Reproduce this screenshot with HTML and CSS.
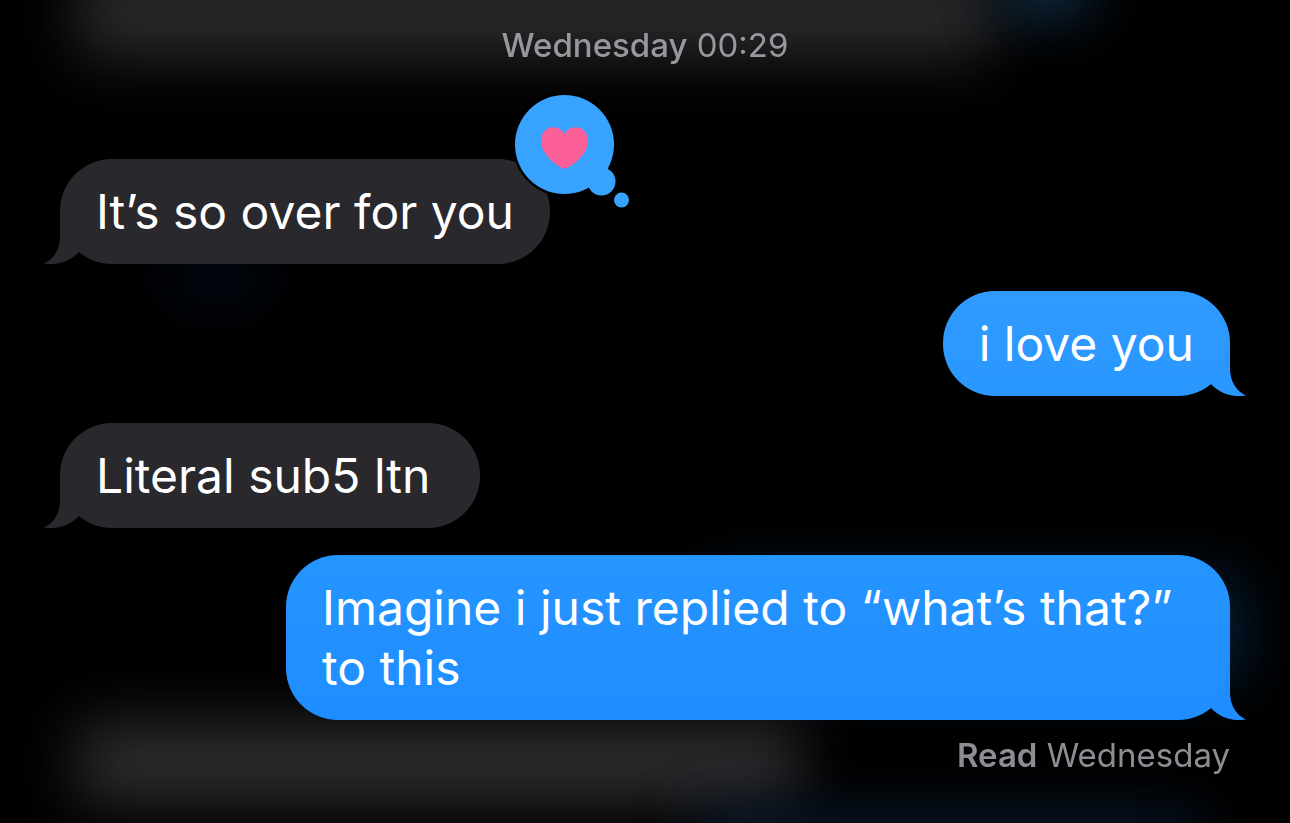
FILE: index.html
```html
<!DOCTYPE html>
<html lang="en">
<head>
	<meta charset="UTF-8">
	<meta name="viewport" content="width=device-width, initial-scale=1">
	<title>Messages</title>
	<link rel="stylesheet" href="styles.css">
</head>
<body>
	<svg class="defs" aria-hidden="true">
		<symbol id="tail" viewBox="0 0 40 54">
			<path d="M16 0V26C16 39 10 49 0 53.500C13 55.500 26 52 35 42L24 22L17 0Z"/>
		</symbol>
	</svg>
	<div class="backdrop" aria-hidden="true">
		<div class="glow glow-top"></div>
		<div class="glow glow-top-blue"></div>
		<div class="glow glow-left-blue"></div>
		<div class="glow glow-right-blue"></div>
		<div class="glow glow-bottom"></div>
		<div class="glow glow-bottom-blue"></div>
	</div>
	<main class="chat">
		<p class="stamp"><span class="day">Wednesday</span> 00:29</p>
		<div class="bubble received">
			<p>It’s so over for you</p>
			<svg class="tail" aria-hidden="true"><use href="#tail"/></svg>
			<svg class="reaction" viewBox="0 0 120 120" role="img" aria-label="Loved">
				<circle class="ring" cx="52.500" cy="52.500" r="52"/>
				<circle cx="52.500" cy="52.500" r="49.500"/>
				<circle cx="89.500" cy="89.500" r="14"/>
				<circle cx="109.500" cy="108" r="7.500"/>
				<path class="heart" d="M52.500 42C50 37.500 46 35.200 41.500 35.200C34 35.200 29 41 29 49C29 60 39 69.500 48 75C50 76.300 51 76.500 52.500 76.500C54 76.500 55 76.300 57 75C66 69.500 76 60 76 49C76 41 71 35.200 63.500 35.200C59 35.200 55 37.500 52.500 42Z"/>
			</svg>
		</div>
		<div class="bubble sent">
			<p>i love you</p>
			<svg class="tail" aria-hidden="true"><use href="#tail"/></svg>
		</div>
		<div class="bubble received">
			<p>Literal sub5 ltn&nbsp;</p>
			<svg class="tail" aria-hidden="true"><use href="#tail"/></svg>
		</div>
		<div class="bubble sent last">
			<p>Imagine i just replied to “what’s that?” to this</p>
			<svg class="tail" aria-hidden="true"><use href="#tail"/></svg>
		</div>
		<p class="receipt"><b>Read</b> Wednesday</p>
	</main>
</body>
</html>
```
FILE: styles.css
```css
*{
	box-sizing: border-box;
	padding: 0;
	margin: 0;
}
body{
	min-height: 100vh;
	background: #000;
	color: #fff;
	font-family: Inter, "Liberation Sans", sans-serif;
}
.defs{
	position: absolute;
	width: 0;
	height: 0;
}
/* blurred shapes behind the thread */
.backdrop{
	position: fixed;
	inset: 0;
	overflow: hidden;
	z-index: -1;
}
.glow{
	position: absolute;
	filter: blur(30px);
}
.glow-top{
	left: 6%;
	right: 23%;
	top: -30px;
	height: 86px;
	background: #2b2b2d;
}
.glow-top-blue{
	left: 78%;
	width: 80px;
	top: -44px;
	height: 56px;
	background: #153858;
}
.glow-left-blue{
	left: 13%;
	width: 100px;
	top: 260px;
	height: 40px;
	background: #020a18;
}
.glow-right-blue{
	left: 55%;
	right: 4%;
	top: 580px;
	height: 100px;
	background: #062440;
}
.glow-bottom{
	left: 6%;
	right: 38%;
	bottom: 22px;
	height: 76px;
	background: #2f2f31;
}
.glow-bottom-blue{
	left: 54%;
	right: 7%;
	bottom: -40px;
	height: 46px;
	background: #0a1c34;
}
.chat{
	display: flex;
	flex-direction: column;
	align-items: flex-start;
	gap: 27px;
	padding: 25px 60px;
}
.stamp,
.receipt{
	font-size: 33px;
	line-height: 40px;
	color: #8e8d93;
}
.stamp{
	align-self: center;
	margin-bottom: 67px;
	color: #98979e;
}
.day{
	font-weight: 500;
}
.bubble{
	position: relative;
	max-width: min(944px, 100%);
	padding: 23px 36px 22px;
	border-radius: 52px;
	font-size: 48px;
	line-height: 60px;
}
.received{
	background: #29282d;
	color: #29282d;
}
.sent{
	align-self: flex-end;
	background: linear-gradient(#2f9bff, #2a97ff);
	color: #2a97ff;
}
.last{
	background: linear-gradient(#2595ff, #1f8dff);
	color: #1f8dff;
}
.bubble p{
	color: #fff;
}
.tail{
	position: absolute;
	bottom: 0;
	left: -16px;
	width: 40px;
	height: 54px;
	fill: currentColor;
}
.sent .tail{
	left: auto;
	right: -16px;
	transform: scaleX(-1);
}
.reaction{
	position: absolute;
	top: -67px;
	left: calc(100% - 38px);
	width: 120px;
	height: 120px;
	fill: #38a2ff;
}
.reaction .ring{
	fill: #000;
}
.reaction .heart{
	fill: #fb5f98;
}
.receipt{
	align-self: flex-end;
	margin-top: -12px;
}
.receipt b{
	font-weight: 600;
}
```
